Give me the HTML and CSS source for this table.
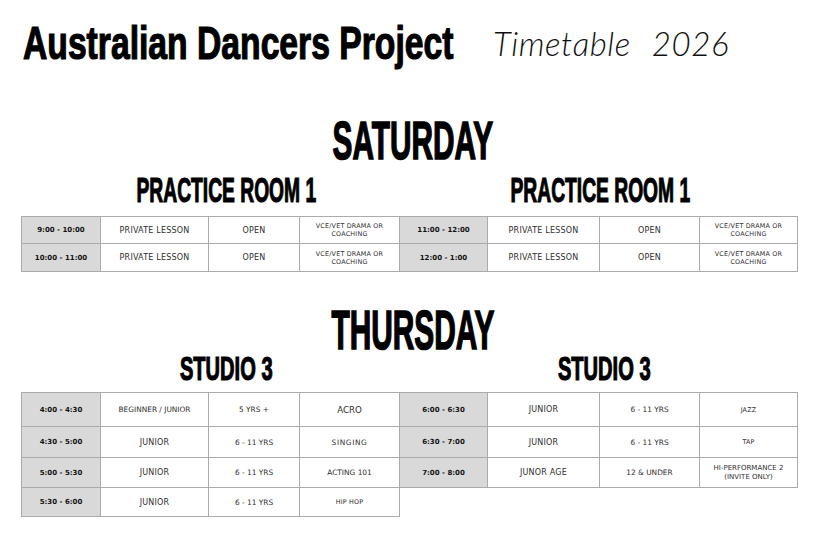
FILE: index.html
```html
<!DOCTYPE html>
<html lang="en">
<head>
<meta charset="utf-8">
<title>Australian Dancers Project – Timetable 2026</title>
<link rel="stylesheet" href="styles.css">
</head>
<body>
<div class="page">
  <header class="top">
    <h1 class="brand"><span class="squish">Australian Dancers Project</span></h1>
    <div class="script">Timetable 2026</div>
  </header>

  <section class="day day-sat">
    <h2 class="day-name"><span class="squish">SATURDAY</span></h2>
    <div class="rooms">
      <h3 class="room room-left"><span class="squish">PRACTICE ROOM 1</span></h3>
      <h3 class="room room-right"><span class="squish">PRACTICE ROOM 1</span></h3>
    </div>
    <div class="tables">
      <div class="tt tt-left rows-sat">
        <div class="cell time">9:00 - 10:00</div>
        <div class="cell md">PRIVATE LESSON</div>
        <div class="cell md">OPEN</div>
        <div class="cell xs">VCE/VET DRAMA OR<br>COACHING</div>
        <div class="cell time">10:00 - 11:00</div>
        <div class="cell md">PRIVATE LESSON</div>
        <div class="cell md">OPEN</div>
        <div class="cell xs">VCE/VET DRAMA OR<br>COACHING</div>
      </div>
      <div class="tt tt-right rows-sat">
        <div class="cell time">11:00 - 12:00</div>
        <div class="cell md">PRIVATE LESSON</div>
        <div class="cell md">OPEN</div>
        <div class="cell xs">VCE/VET DRAMA OR<br>COACHING</div>
        <div class="cell time">12:00 - 1:00</div>
        <div class="cell md">PRIVATE LESSON</div>
        <div class="cell md">OPEN</div>
        <div class="cell xs">VCE/VET DRAMA OR<br>COACHING</div>
      </div>
    </div>
  </section>

  <section class="day day-thu">
    <h2 class="day-name"><span class="squish">THURSDAY</span></h2>
    <div class="rooms">
      <h3 class="room room-left"><span class="squish">STUDIO 3</span></h3>
      <h3 class="room room-right"><span class="squish">STUDIO 3</span></h3>
    </div>
    <div class="tables">
      <div class="tt tt-left rows-thu">
        <div class="cell time">4:00 - 4:30</div>
        <div class="cell sm">BEGINNER / JUNIOR</div>
        <div class="cell sm">5 YRS +</div>
        <div class="cell lg">ACRO</div>
        <div class="cell time">4:30 - 5:00</div>
        <div class="cell md">JUNIOR</div>
        <div class="cell sm">6 - 11 YRS</div>
        <div class="cell sm wide">SINGING</div>
        <div class="cell time">5:00 - 5:30</div>
        <div class="cell md">JUNIOR</div>
        <div class="cell sm">6 - 11 YRS</div>
        <div class="cell sm">ACTING 101</div>
        <div class="cell time">5:30 - 6:00</div>
        <div class="cell md">JUNIOR</div>
        <div class="cell sm">6 - 11 YRS</div>
        <div class="cell xs">HIP HOP</div>
      </div>
      <div class="tt tt-right rows-thu">
        <div class="cell time">6:00 - 6:30</div>
        <div class="cell md">JUNIOR</div>
        <div class="cell sm">6 - 11 YRS</div>
        <div class="cell xs">JAZZ</div>
        <div class="cell time">6:30 - 7:00</div>
        <div class="cell md">JUNIOR</div>
        <div class="cell sm">6 - 11 YRS</div>
        <div class="cell xs">TAP</div>
        <div class="cell time">7:00 - 8:00</div>
        <div class="cell md">JUNOR AGE</div>
        <div class="cell sm">12 &amp; UNDER</div>
        <div class="cell sm2">HI-PERFORMANCE 2<br>(INVITE ONLY)</div>
      </div>
    </div>
  </section>
</div>
</body>
</html>
```

FILE: styles.css
```css
* { box-sizing: border-box; }

html, body {
  margin: 0;
  padding: 0;
  background: #ffffff;
}

body {
  width: 826px;
  height: 540px;
  overflow: hidden;
  font-family: "DejaVu Sans", "Liberation Sans", sans-serif;
  color: #2b2b2b;
}

.page {
  padding-top: 20px;
}

/* condensed display type */
.squish {
  display: inline-block;
  white-space: nowrap;
  transform: scaleX(var(--sx, 0.6));
  transform-origin: center;
  -webkit-text-stroke: var(--stroke, 1.1px) #000;
}

h1, h2, h3 { margin: 0; font-weight: 700; color: #000; }

.top {
  display: flex;
  align-items: flex-start;
  height: 46px;
}

.brand {
  font-family: "Liberation Sans", Arial, sans-serif;
  font-size: 46px;
  line-height: 46px;
  width: 433px;
  margin-left: 23px;
  white-space: nowrap;
}

.brand .squish {
  --sx: 0.732;
  --stroke: 1.2px;
  transform-origin: left center;
}

.script {
  margin-left: 37px;
  margin-top: 7px;
  font-family: "Lato", "Open Sans", sans-serif;
  font-style: italic;
  font-weight: 300;
  font-size: 33px;
  line-height: 33px;
  letter-spacing: 0.6px;
  word-spacing: 12px;
  color: #111;
  white-space: nowrap;
}

.day-name {
  font-family: "Liberation Sans", Arial, sans-serif;
  text-align: center;
  line-height: 48px;
}

.day-sat .day-name {
  margin-top: 51px;
  font-size: 53px;
}
.day-sat .day-name .squish { --sx: 0.562; --stroke: 1.6px; }

.day-thu .day-name {
  margin-top: 34px;
  font-size: 56px;
}
.day-thu .day-name .squish { --sx: 0.532; --stroke: 1.7px; }

.rooms {
  display: flex;
  margin-left: 21px;
}

.room {
  font-family: "Liberation Sans", Arial, sans-serif;
  text-align: center;
  line-height: 30px;
  white-space: nowrap;
}

.room-left { width: 379px; padding-left: 31px; }
.room-right { width: 398px; padding-left: 2px; }

.day-sat .rooms { margin-top: 10px; }
.day-sat .room { font-size: 35px; }
.day-sat .room .squish { --sx: 0.55; --stroke: 1.2px; }

.day-thu .rooms { margin-top: 0; }
.day-thu .room { font-size: 33.5px; }
.day-thu .room .squish { --sx: 0.6; --stroke: 1.2px; }
.day-thu .room-right { padding-left: 10px; }

.tables {
  display: flex;
  align-items: flex-start;
  margin-left: 21px;
}

.day-sat .tables { margin-top: 11px; }
.day-thu .tables { margin-top: 8px; }

.tt {
  display: grid;
  border-top: 1px solid #ababab;
}

.tt-left {
  border-left: 1px solid #ababab;
  grid-template-columns: 79px 108px 91px 100px;
}

.tt-right {
  grid-template-columns: 88px 112px 100px 98px;
}

.rows-sat { grid-template-rows: 27px 28px; }
.rows-thu { grid-template-rows: 34px 31px 30px 29px; }

.cell {
  display: flex;
  align-items: center;
  justify-content: center;
  text-align: center;
  border-right: 1px solid #ababab;
  border-bottom: 1px solid #ababab;
  white-space: nowrap;
  color: #2e2e2e;
}

.time {
  background: #d9d9d9;
  font-weight: 700;
  font-size: 7px;
  color: #111;
}

.md { font-size: 8px; letter-spacing: 0.2px; }
.sm { font-size: 7.4px; }
.wide { letter-spacing: 0.6px; }
.lg { font-size: 8.7px; }
.xs { font-size: 6.4px; line-height: 8px; letter-spacing: 0.2px; }
.sm2 { font-size: 7px; line-height: 9px; }
```
